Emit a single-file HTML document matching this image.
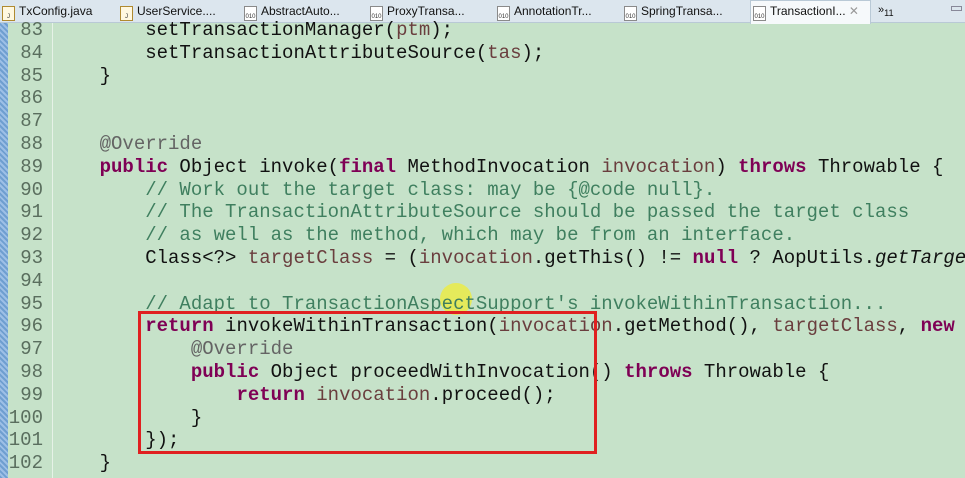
<!DOCTYPE html>
<html><head><meta charset="utf-8"><style>
body{margin:0;width:965px;height:478px;overflow:hidden;background:#c6e2c9;position:relative;font-family:"Liberation Mono",monospace}
#tabs{position:absolute;left:0;top:0;width:965px;height:22px;background:#dce6ee;border-bottom:1px solid #b9c9d6;font-family:"Liberation Sans",sans-serif;font-size:12px;color:#111}
.tab{position:absolute;top:4px;white-space:nowrap}
.ic{display:inline-block;width:11px;height:13px;border:1px solid #8a8a8a;background:#fff;vertical-align:-3px;margin-right:4px;font-size:6px;line-height:20px;color:#333;text-align:center}
.ic.j{border-color:#b08a30;background:#fff8e0}
#act{position:absolute;left:750px;top:0;width:119px;height:23px;background:#f6f9fb;border:1px solid #b9c9d6;border-bottom:none}
#strip{position:absolute;left:0;top:23px;width:8px;height:455px;background:repeating-linear-gradient(45deg,#6f9fd0 0 2px,#9dbfe6 2px 4px)}
#gut{position:absolute;left:52px;top:23px;width:1px;height:455px;background:#e6f2e7}
.ln{position:absolute;left:0;width:43px;text-align:right;color:#5a6e5e;font-size:19px;line-height:22.8px}
.cd{position:absolute;left:54px;width:911px;overflow:hidden;white-space:pre;font-size:19px;line-height:22.8px;color:#111}
.k{color:#7f0055;font-weight:bold}.c{color:#3f7f5f}.a{color:#646464}.p{color:#6a3e3e}.i{font-style:italic}
#box{position:absolute;left:138px;top:311px;width:453px;height:137px;border:3px solid #e02020}
#dot{position:absolute;left:440px;top:283px;width:32px;height:32px;border-radius:50%;background:rgba(255,240,0,.55)}
</style></head><body>
<div id="tabs">
<div id="act"></div>
<div class="tab" style="left:2px"><span class="ic j">J</span>TxConfig.java</div>
<div class="tab" style="left:120px"><span class="ic j">J</span>UserService....</div>
<div class="tab" style="left:244px"><span class="ic">010</span>AbstractAuto...</div>
<div class="tab" style="left:370px"><span class="ic">010</span>ProxyTransa...</div>
<div class="tab" style="left:497px"><span class="ic">010</span>AnnotationTr...</div>
<div class="tab" style="left:624px"><span class="ic">010</span>SpringTransa...</div>
<div class="tab" style="left:753px"><span class="ic">010</span>TransactionI... <span style="color:#999">✕</span></div>
<div class="tab" style="left:878px;font-size:11px">»<sub>11</sub></div>
<div class="tab" style="left:951px;top:6px;width:9px;height:3px;border:1px solid #889"></div>
</div>
<div id="strip"></div><div id="gut"></div>
<div id="dot"></div>
<div class="ln" style="top:19px">83<br>84<br>85<br>86<br>87<br>88<br>89<br>90<br>91<br>92<br>93<br>94<br>95<br>96<br>97<br>98<br>99<br>100<br>101<br>102</div>
<div class="cd" style="top:19px">        setTransactionManager(<span class="p">ptm</span>);
        setTransactionAttributeSource(<span class="p">tas</span>);
    }


    <span class="a">@Override</span>
    <span class="k">public</span> Object invoke(<span class="k">final</span> MethodInvocation <span class="p">invocation</span>) <span class="k">throws</span> Throwable {
        <span class="c">// Work out the target class: may be {@code null}.</span>
        <span class="c">// The TransactionAttributeSource should be passed the target class</span>
        <span class="c">// as well as the method, which may be from an interface.</span>
        Class&lt;?&gt; <span class="p">targetClass</span> = (<span class="p">invocation</span>.getThis() != <span class="k">null</span> ? AopUtils.<span class="i">getTargetClass</span>

        <span class="c">// Adapt to TransactionAspectSupport's invokeWithinTransaction...</span>
        <span class="k">return</span> invokeWithinTransaction(<span class="p">invocation</span>.getMethod(), <span class="p">targetClass</span>, <span class="k">new</span>
            <span class="a">@Override</span>
            <span class="k">public</span> Object proceedWithInvocation() <span class="k">throws</span> Throwable {
                <span class="k">return</span> <span class="p">invocation</span>.proceed();
            }
        });
    }</div>
<div id="box"></div>
</body></html>
